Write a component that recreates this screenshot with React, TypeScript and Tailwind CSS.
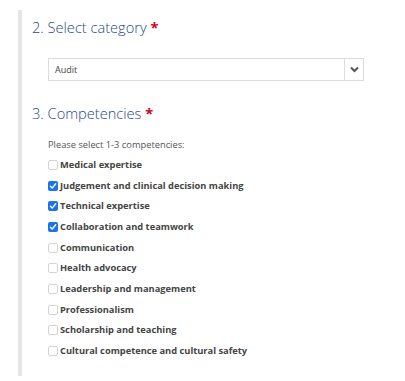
import React from "react";

const items: [string, boolean][] = [
  ["Medical expertise", false],
  ["Judgement and clinical decision making", true],
  ["Technical expertise", true],
  ["Collaboration and teamwork", true],
  ["Communication", false],
  ["Health advocacy", false],
  ["Leadership and management", false],
  ["Professionalism", false],
  ["Scholarship and teaching", false],
  ["Cultural competence and cultural safety", false],
];

function Box({ checked }: { checked: boolean }) {
  if (checked) {
    return (
      <span className="flex h-[10px] w-[10px] items-center justify-center rounded-[2px] bg-[#1a73e8]">
        <svg width="8" height="8" viewBox="0 0 10 10">
          <path d="M1.8 5.2 L4 7.6 L8.4 2.2" fill="none" stroke="white" strokeWidth="1.8" strokeLinecap="round" strokeLinejoin="round" />
        </svg>
      </span>
    );
  }
  return <span className="block h-[10px] w-[10px] rounded-[2px] border border-[#d4d4d4] bg-white" />;
}

export default function App() {
  return (
    <div className="h-[381px] w-[405px] bg-white pt-[10px] pl-[18px] font-['Open_Sans',sans-serif]">
      <div className="h-[366px] border-l-4 border-[#e6e6e6] pl-[10px]">
        <h2 className="pt-[7px] text-[14.6px] font-light leading-[20px] text-[#1d4a85]">
          2. Select category <span className="font-bold text-[#d0021b]">*</span>
        </h2>
        <div className="ml-[16px] mt-[21px] flex h-[23px] w-[316px] items-center border border-[#dcdcdc] bg-white">
          <span className="flex-1 pl-[6px] text-[9px] text-[#444]">Audit</span>
          <span className="flex h-full w-[19px] items-center justify-center border-l border-[#dcdcdc]">
            <svg width="9" height="7" viewBox="0 0 9 7">
              <path d="M1 1.5 L4.5 5 L8 1.5" fill="none" stroke="#555" strokeWidth="2" />
            </svg>
          </span>
        </div>
        <h2 className="mt-[21.5px] text-[14.6px] font-light leading-[20px] text-[#1d4a85]">
          3. Competencies <span className="font-bold text-[#d0021b]">*</span>
        </h2>
        <div className="ml-[16px] mt-[15.5px]">
          <p className="text-[9.3px] leading-[14px] text-[#555]">Please select 1-3 competencies:</p>
          <div className="mt-[6px] flex flex-col gap-[6.67px]">
            {items.map(([label, c]) => (
              <label key={label} className="flex h-[14px] items-center gap-[2px]">
                <Box checked={c} />
                <span className="text-[9.3px] font-bold leading-[14px] text-[#444]">{label}</span>
              </label>
            ))}
          </div>
        </div>
      </div>
    </div>
  );
}
